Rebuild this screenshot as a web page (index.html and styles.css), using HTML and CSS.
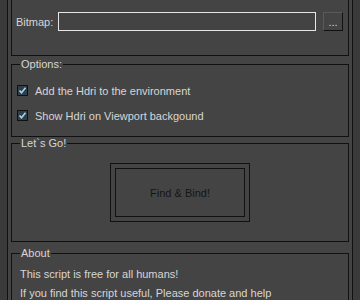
FILE: index.html
```html
<!DOCTYPE html>
<html lang="en">
<head>
  <meta charset="UTF-8" />
  <title>Hdri Binder</title>
  <link rel="stylesheet" href="styles.css">
</head>
<body>
  <div class="rollout">
    <fieldset class="group group-bitmap">
      <div class="bitmap-row">
        <span class="field-label">Bitmap:</span>
        <div class="bitmap-input"></div>
        <button class="browse-btn">...</button>
      </div>
    </fieldset>

    <fieldset class="group group-options">
      <legend>Options:</legend>
      <div class="options-body">
        <label class="check-row">
          <svg class="check" width="11" height="11" viewBox="0 0 11 11">
            <rect x="0.5" y="0.5" width="10" height="10" fill="#2e3f4b" stroke="#111"/>
            <path d="M2.5 5.5 L4.5 7.8 L8.5 2.8" fill="none" stroke="#a9d6ea" stroke-width="1.6"/>
          </svg>
          Add the Hdri to the environment
        </label>
        <label class="check-row">
          <svg class="check" width="11" height="11" viewBox="0 0 11 11">
            <rect x="0.5" y="0.5" width="10" height="10" fill="#2e3f4b" stroke="#111"/>
            <path d="M2.5 5.5 L4.5 7.8 L8.5 2.8" fill="none" stroke="#a9d6ea" stroke-width="1.6"/>
          </svg>
          Show Hdri on Viewport backgound
        </label>
      </div>
    </fieldset>

    <fieldset class="group group-go">
      <legend>Let`s Go!</legend>
      <div class="go-body">
        <div class="default-frame">
          <button class="bind-btn">Find &amp; Bind!</button>
        </div>
      </div>
    </fieldset>

    <fieldset class="group group-about">
      <legend>About</legend>
      <div class="about-body">
        <p>This script is free for all humans!</p>
        <p>If you find this script useful, Please donate and help</p>
      </div>
    </fieldset>
  </div>
</body>
</html>
```

FILE: styles.css
```css
body {
  margin: 0;
  background-color: #3a3a3a;
  font-family: 'Liberation Sans', Arial, sans-serif;
  font-size: 11px;
  color: #d6d6d6;
  height: 300px;
  overflow: hidden;
}

.rollout {
  margin-left: 7px;
  width: 338px;
  height: 300px;
  overflow: hidden;
  padding: 0 3px;
  background-color: #444;
  border-left: 1px solid #111;
  border-right: 1px solid #111;
}

.group {
  margin: 0;
  padding: 0;
  border: 1px solid #111;
  min-width: 0;
}

legend {
  margin-left: 8px;
  padding: 0 1px;
  line-height: 13px;
  color: #d6d6d6;
}

/* bitmap */
.group-bitmap {
  border-top: none;
  padding: 12px 5px 24px 4px;
}

.bitmap-row {
  display: flex;
  align-items: center;
  height: 19px;
}

.field-label {
  width: 42px;
}

.bitmap-input {
  width: 257px;
  height: 17px;
  border: 1px solid #e6e6e6;
  background-color: #434343;
}

.browse-btn {
  margin-left: 7px;
  width: 20px;
  height: 19px;
  padding: 2px 0 0;
  background-color: #444;
  border: 1px solid #111;
  border-top-color: #5a5a5a;
  border-left-color: #5a5a5a;
  color: #d6d6d6;
  font-family: inherit;
  font-size: 11px;
  line-height: 15px;
}

/* options */
.group-options {
  margin-top: 2px;
}

.options-body {
  display: flex;
  flex-direction: column;
  gap: 12px;
  padding: 13px 0 14px 5px;
}

.check-row {
  display: flex;
  align-items: center;
  gap: 7px;
  height: 13px;
}

/* go */
.go-body {
  display: flex;
  justify-content: center;
  padding: 13px 0 19px;
}

.default-frame {
  border: 1px solid #111;
  padding: 4px;
}

.bind-btn {
  display: block;
  width: 130px;
  height: 49px;
  border: 1px solid #111;
  background-color: #444;
  color: #151515;
  font-family: inherit;
  font-size: 11px;
}

/* about */
.group-about {
  margin-top: 5px;
}

.about-body {
  padding: 5px 0 0 8px;
}

.about-body p {
  margin: 0;
  line-height: 19px;
}
```
